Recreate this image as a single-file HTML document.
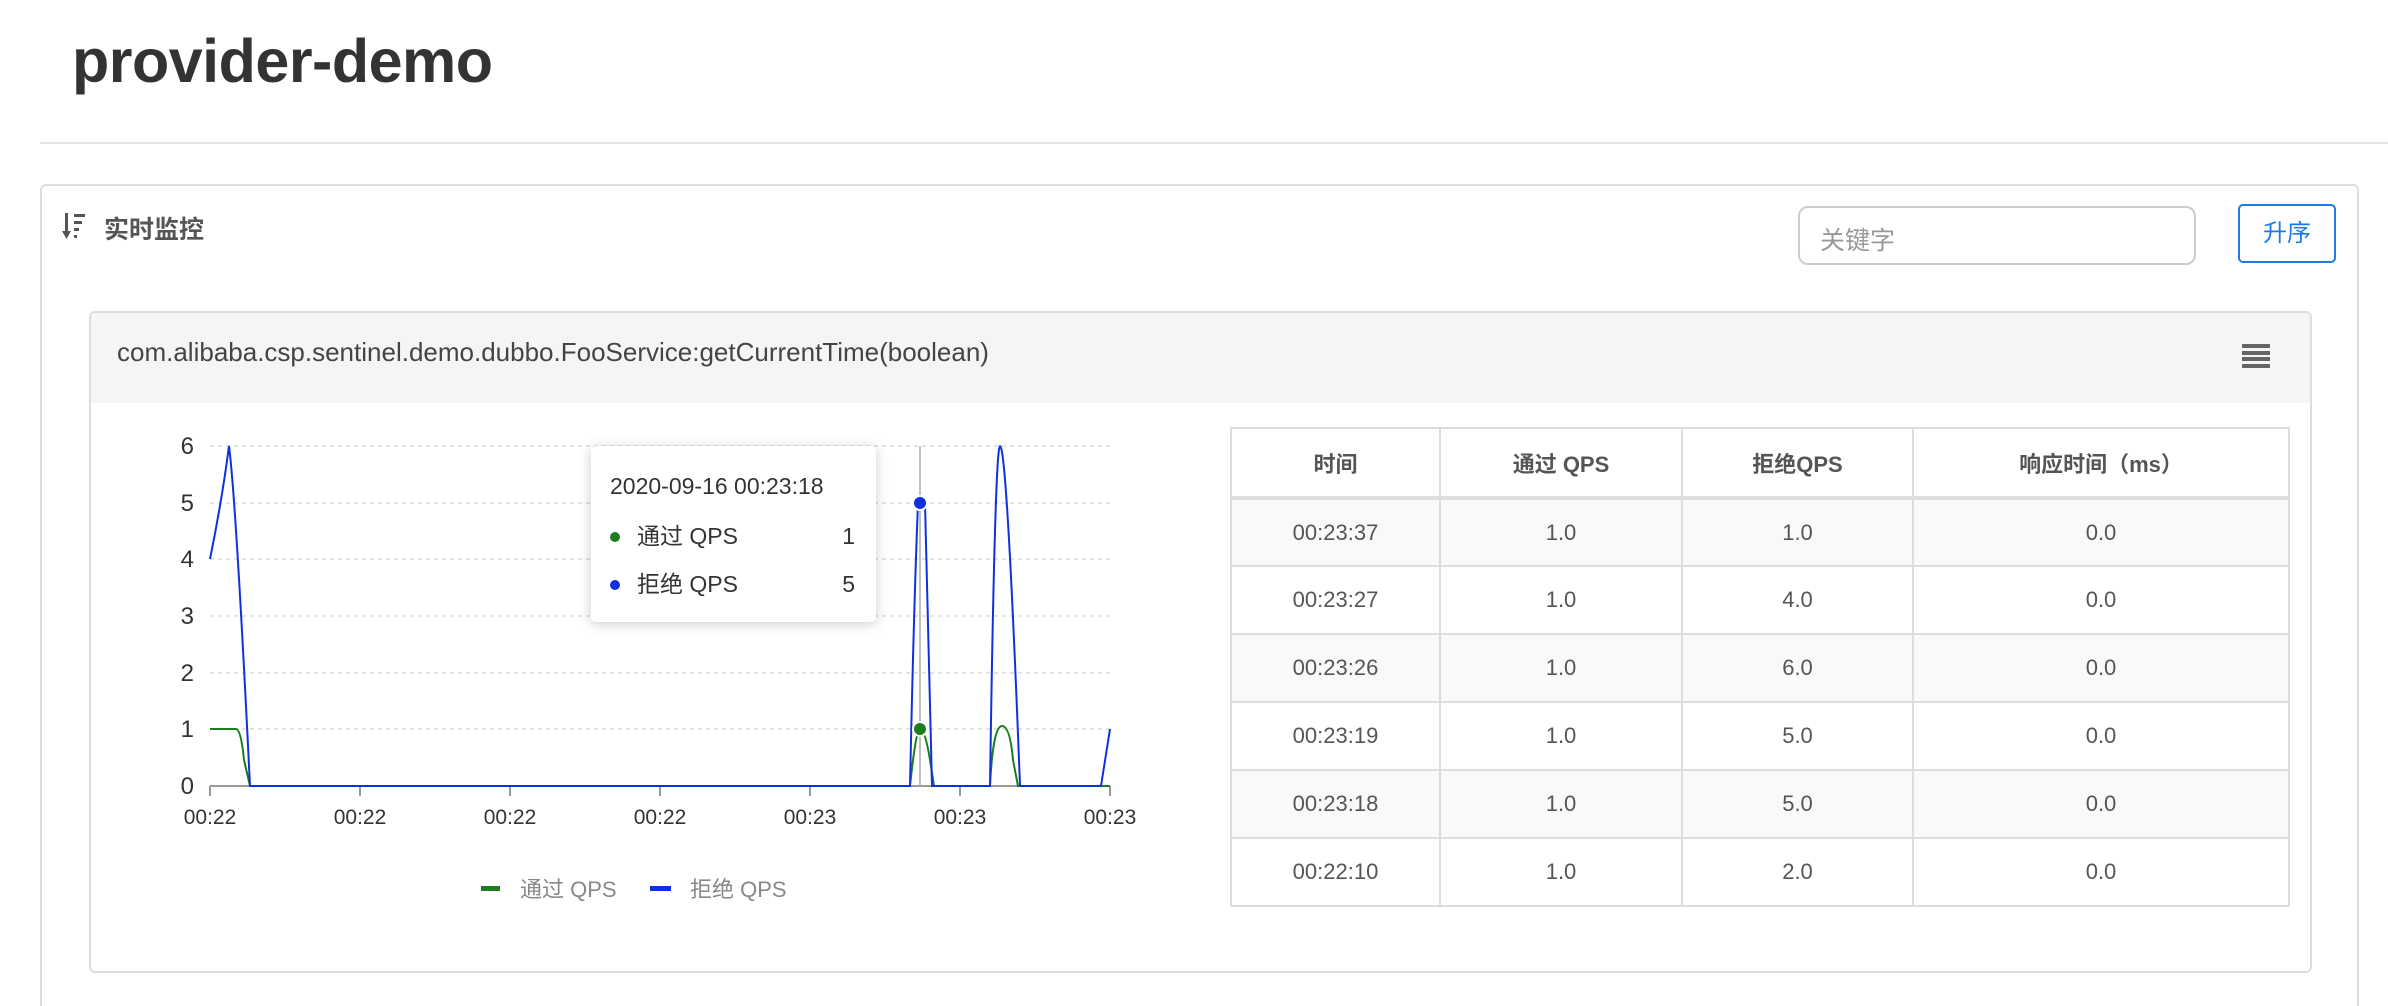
<!DOCTYPE html>
<html><head><meta charset="utf-8"><style>
*{margin:0;padding:0;box-sizing:border-box}
html,body{width:2388px;height:1006px;overflow:hidden}
body{background:#fff;position:relative;font-family:"Liberation Sans","Noto Sans CJK SC",sans-serif;color:#333}
.abs{position:absolute}
h1{position:absolute;left:72px;top:26px;font-size:61px;font-weight:bold;color:#333;letter-spacing:-0.5px}
.hr{left:40px;top:142px;width:2348px;height:2px;background:#e5e5e5}
.outer{left:40px;top:184px;width:2319px;height:830px;border:2px solid #ddd;border-bottom:none;border-radius:6px 6px 0 0}
.inner{left:89px;top:311px;width:2223px;height:662px;border:2px solid #ddd;border-radius:6px;overflow:hidden}
.ihead{left:0;top:0;width:100%;height:90px;background:#f5f5f5}
table{position:absolute;left:1230px;top:427px;width:1060px;border-collapse:collapse;font-size:22px;color:#555}
td,th{border:2px solid #ddd;text-align:center;height:68px;font-weight:normal}
th{font-weight:bold;height:70px;border-bottom:4px solid #ddd}
tr:nth-child(even) td{background:#f9f9f9}
</style></head><body>
<h1>provider-demo</h1>
<div class="abs hr"></div>
<div class="abs outer"></div>
<svg class="abs" style="left:62px;top:213px" width="24" height="27" viewBox="0 0 24 27">
<rect x="3" y="0" width="3" height="20" fill="#555"/><path d="M0 18 L9 18 L4.5 26 Z" fill="#555"/>
<rect x="12" y="1" width="11" height="3" fill="#555"/><rect x="12" y="8" width="8" height="3" fill="#555"/><rect x="12" y="15" width="5" height="3" fill="#555"/><rect x="12" y="22" width="3" height="3" fill="#555"/>
</svg>
<div class="abs" style="left:104px;top:210px;font-size:25px;font-weight:bold;color:#555">实时监控</div>
<div class="abs" style="left:1798px;top:206px;width:398px;height:59px;border:2px solid #ccc;border-radius:10px;font-size:25px;color:#999;padding:13px 0 0 20px">关键字</div>
<div class="abs" style="left:2238px;top:204px;width:98px;height:59px;border:2px solid #1e7ae6;border-radius:5px;font-size:24px;color:#1e7ae6;text-align:center;line-height:55px">升序</div>
<div class="abs inner"><div class="abs ihead"></div>
<div class="abs" style="left:26px;top:24px;font-size:26px;color:#444">com.alibaba.csp.sentinel.demo.dubbo.FooService:getCurrentTime(boolean)</div>
<div class="abs" style="left:2151px;top:31px;width:28px">
<div style="height:4px;background:#666;margin-bottom:2.5px"></div><div style="height:4px;background:#666;margin-bottom:2.5px"></div><div style="height:4px;background:#666;margin-bottom:2.5px"></div><div style="height:4px;background:#666"></div></div>
</div>
<svg class="abs" style="left:0;top:0" width="1240" height="1006" font-family="Liberation Sans, Noto Sans CJK SC, sans-serif">
<g stroke="#e3e3e3" stroke-width="2" stroke-dasharray="4,4">
<line x1="210" y1="446" x2="1110" y2="446"/><line x1="210" y1="503" x2="1110" y2="503"/><line x1="210" y1="559" x2="1110" y2="559"/><line x1="210" y1="616" x2="1110" y2="616"/><line x1="210" y1="673" x2="1110" y2="673"/><line x1="210" y1="729" x2="1110" y2="729"/>
</g>
<line x1="210" y1="786" x2="1110" y2="786" stroke="#999" stroke-width="2"/>
<g stroke="#999" stroke-width="2"><line x1="210" y1="786" x2="210" y2="796"/><line x1="360" y1="786" x2="360" y2="796"/><line x1="510" y1="786" x2="510" y2="796"/><line x1="660" y1="786" x2="660" y2="796"/><line x1="810" y1="786" x2="810" y2="796"/><line x1="960" y1="786" x2="960" y2="796"/><line x1="1110" y1="786" x2="1110" y2="796"/></g>
<g font-size="24" fill="#333" text-anchor="end"><text x="194" y="454">6</text><text x="194" y="511">5</text><text x="194" y="567">4</text><text x="194" y="624">3</text><text x="194" y="681">2</text><text x="194" y="737">1</text><text x="194" y="794">0</text></g>
<g font-size="21" fill="#333" text-anchor="middle"><text x="210" y="824">00:22</text><text x="360" y="824">00:22</text><text x="510" y="824">00:22</text><text x="660" y="824">00:22</text><text x="810" y="824">00:23</text><text x="960" y="824">00:23</text><text x="1110" y="824">00:23</text></g>
<line x1="920" y1="446" x2="920" y2="786" stroke="#aaa" stroke-width="1.5"/>
<path d="M210 729 L236 729 Q241 729 244 760 L250 786 L910 786 Q916 729 920 729 Q925 729 930 760 L934 786 L990 786 Q993 726 1002 726 Q1010 726 1013 760 L1018 786 L1110 786" fill="none" stroke="#1a7f1a" stroke-width="2"/>
<path d="M210 559 Q222 500 229 446 Q236 500 250 786 L910 786 Q914 600 918 503 L925 503 Q928 600 932 786 L990 786 Q995 446 1000 446 Q1007 446 1020 786 L1101 786 L1110 729" fill="none" stroke="#1030e0" stroke-width="2"/>
<circle cx="920" cy="503" r="7" fill="#1030e0" stroke="#fff" stroke-width="2"/>
<circle cx="920" cy="729" r="7" fill="#1a7f1a" stroke="#fff" stroke-width="2"/>
<defs><filter id="sh" x="-20%" y="-20%" width="140%" height="140%"><feDropShadow dx="0" dy="2" stdDeviation="6" flood-opacity="0.2"/></filter></defs>
<rect x="591" y="446" width="285" height="176" rx="5" fill="#fff" filter="url(#sh)"/>
<text x="610" y="494" font-size="23" fill="#333">2020-09-16 00:23:18</text>
<circle cx="615" cy="537" r="5" fill="#1a7f1a"/><text x="637" y="544" font-size="23" fill="#333">通过 QPS</text><text x="855" y="544" font-size="23" fill="#333" text-anchor="end">1</text>
<circle cx="615" cy="585" r="5" fill="#1030e0"/><text x="637" y="592" font-size="23" fill="#333">拒绝 QPS</text><text x="855" y="592" font-size="23" fill="#333" text-anchor="end">5</text>
<rect x="481" y="886" width="19" height="5" fill="#1a7f1a"/><text x="520" y="897" font-size="22" fill="#888">通过 QPS</text>
<rect x="650" y="886" width="21" height="5" fill="#1030e0"/><text x="690" y="897" font-size="22" fill="#888">拒绝 QPS</text>
</svg>
<table>
<tr><th style="width:209px">时间</th><th style="width:242px">通过 QPS</th><th style="width:231px">拒绝QPS</th><th>响应时间（ms）</th></tr>
<tr><td>00:23:37</td><td>1.0</td><td>1.0</td><td>0.0</td></tr>
<tr><td>00:23:27</td><td>1.0</td><td>4.0</td><td>0.0</td></tr>
<tr><td>00:23:26</td><td>1.0</td><td>6.0</td><td>0.0</td></tr>
<tr><td>00:23:19</td><td>1.0</td><td>5.0</td><td>0.0</td></tr>
<tr><td>00:23:18</td><td>1.0</td><td>5.0</td><td>0.0</td></tr>
<tr><td>00:22:10</td><td>1.0</td><td>2.0</td><td>0.0</td></tr>
</table>
</body></html>
